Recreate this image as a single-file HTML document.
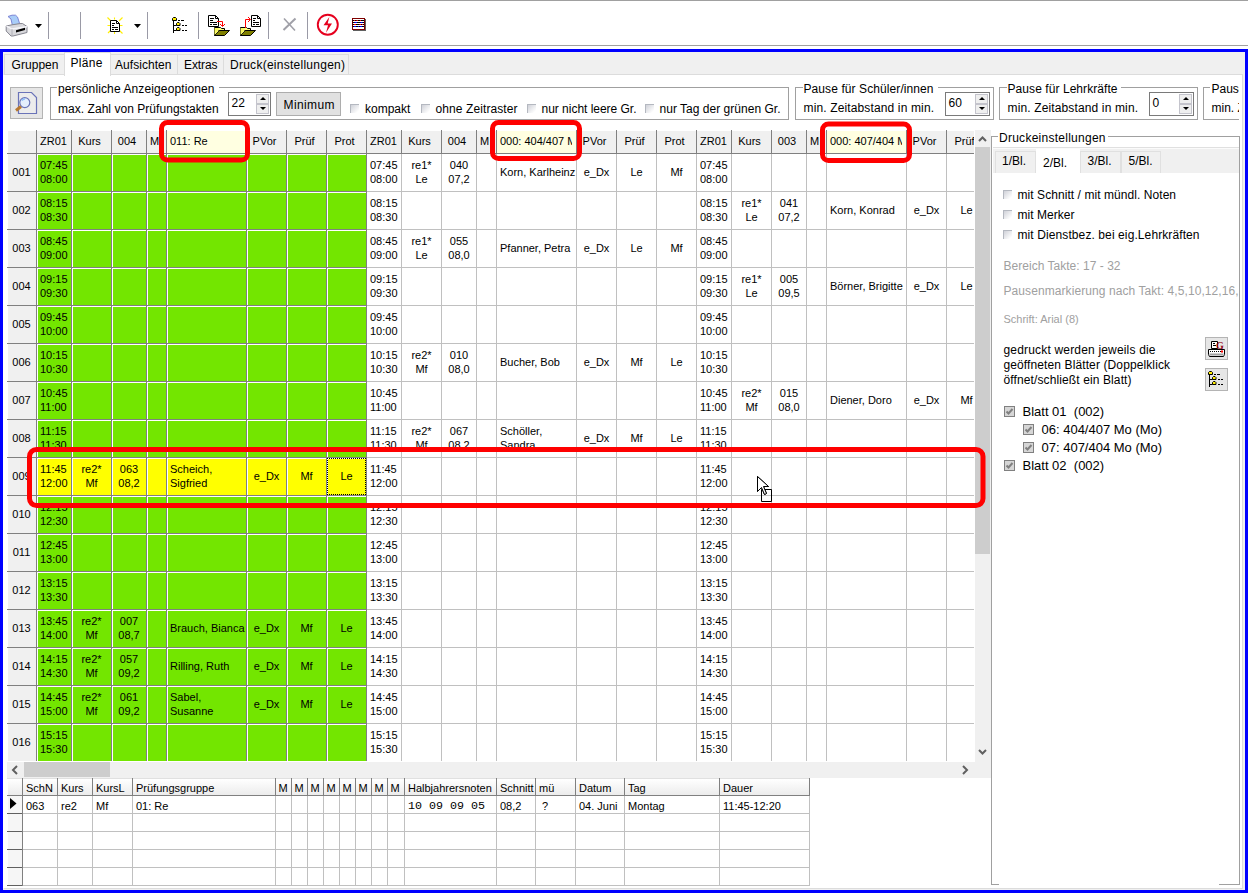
<!DOCTYPE html>
<html><head><meta charset="utf-8"><title>Pläne</title>
<style>
html,body{margin:0;padding:0;background:#fff;}
body{width:1248px;height:893px;position:relative;overflow:hidden;font-family:"Liberation Sans",sans-serif;color:#000;}
div,span,svg{position:absolute;box-sizing:border-box;}
span{white-space:pre;}
.t11{font-size:11px;line-height:14px;}
.t12{font-size:12px;line-height:14px;}
.t13{font-size:13px;line-height:15px;}
.mono{font-family:"Liberation Mono",monospace;font-size:11.67px;line-height:14px;}
.cb{width:9px;height:9px;border-top:1px solid #b4b8c0;border-left:1px solid #b4b8c0;background:linear-gradient(135deg,#cfd1d8,#ffffff 85%);}
.cbk{width:11px;height:11px;border:1px solid #808080;background:#d6d6d6;}
.spin{border:1px solid #7a7a7a;background:#fff;}
.sb{background:#efefef;border:1px solid #c4c4cc;}
.btn{background:#e6e6e6;border:1px solid #b4b4b4;}
.clip{overflow:hidden;}
</style></head><body>

<div style="left:0px;top:0px;width:1248px;height:1px;background:#a0a0a0;"></div>
<div style="left:0px;top:45px;width:1248px;height:1px;background:#a0a0a0;"></div>
<div style="left:48px;top:12px;width:1px;height:27px;background:#9a9aa6;"></div>
<div style="left:80px;top:12px;width:1px;height:27px;background:#9a9aa6;"></div>
<div style="left:147px;top:12px;width:1px;height:27px;background:#9a9aa6;"></div>
<div style="left:198px;top:12px;width:1px;height:27px;background:#9a9aa6;"></div>
<div style="left:268px;top:12px;width:1px;height:27px;background:#9a9aa6;"></div>
<div style="left:307px;top:12px;width:1px;height:27px;background:#9a9aa6;"></div>
<svg style="left:5px;top:14px" width="24" height="24" viewBox="0 0 24 24">
<path d="M3,2.5 L7,1.2 L10.5,1.2 L12.5,3 L14.7,9.8 L7.5,11.8 L6,5 Z" fill="#a9cdf8" stroke="#7d86d6" stroke-width="1"/>
<path d="M1.2,12 L7,10.8 L15,9.6 L17.5,9.5 L22,12.5 L22,18.5 L8,22 L6,22 L1.2,17 Z" fill="#d8d8dc" stroke="#85858f" stroke-width="1"/>
<path d="M1.5,12.2 L7,15 L22,12.7" fill="none" stroke="#f6f6fa" stroke-width="1.4"/>
<path d="M7,15 L7,22" stroke="#b0b0b8" stroke-width="1"/>
<path d="M11,16.2 L20,13.8 L20,15.9 L11,18.4 Z" fill="#000"/>
</svg>
<svg style="left:35px;top:24px" width="8" height="5" viewBox="0 0 8 5"><path d="M0,0 L7,0 L3.5,4 Z" fill="#000"/></svg>
<svg style="left:106px;top:16px" width="19" height="19" viewBox="0 0 19 19">
<g stroke="#ffee00" stroke-width="1.1"><path d="M1.5,1.5 L5,5 M16.5,1.5 L13,5 M1.5,9.5 L4,9.5 M16.5,9.5 L14,9.5 M2,17 L5,14 M16.5,17.5 L13,14 M8.5,1.5 L8.5,3.5 M8.5,18 L8.5,16"/></g>
<path d="M4.5,4.5 L10.5,4.5 L13.5,7.5 L13.5,15.5 L4.5,15.5 Z" fill="#fff" stroke="#000" stroke-width="1"/>
<path d="M10.5,4.5 L10.5,7.5 L13.5,7.5" fill="none" stroke="#000" stroke-width="1"/>
<path d="M6,7.5 H9 M6,9.5 H8 M6,11.5 H12 M6,13.5 H8 M9,13.5 H12" stroke="#000" stroke-width="1"/>
</svg>
<svg style="left:134px;top:24px" width="8" height="5" viewBox="0 0 8 5"><path d="M0,0 L7,0 L3.5,4 Z" fill="#000"/></svg>
<svg style="left:171px;top:16px" width="17" height="18" viewBox="0 0 17 18">
<path d="M2.5,4 V17 M2.5,9.5 H5.5 M2.5,14.5 H5.5" stroke="#000" stroke-width="1" fill="none"/>
<path d="M7,4.5 H9 M10,4.5 H13 M11,9.5 H13 M14,9.5 H16 M11,14.5 H13 M14,14.5 H16" stroke="#000" stroke-width="1"/>
<path d="M1.5,2.5 L2.5,1.5 L4.5,1.5 L5.5,2.5 L5.5,4.5 L1.5,4.5 Z" fill="#ffee00" stroke="#000" stroke-width="1"/>
<path d="M5.5,7.5 L6.5,6.5 L8,6.5 L9,7.5 L9,9.5 L5.5,9.5 Z" fill="#ffee00" stroke="#000" stroke-width="1"/>
<path d="M5.5,12.5 L6.5,11.5 L8,11.5 L9,12.5 L9,14.5 L5.5,14.5 Z" fill="#ffee00" stroke="#000" stroke-width="1"/>
</svg>
<svg style="left:208px;top:14px" width="24" height="23" viewBox="0 0 24 23">
<path d="M0.5,1.5 L7.5,1.5 L10.5,4.5 L10.5,12.5 L0.5,12.5 Z" fill="#fff" stroke="#000" stroke-width="1"/>
<path d="M7.5,1.5 V4.5 H10.5" fill="none" stroke="#000"/>
<path d="M2,4.5 H6 M2,6.5 H5 M2,8.5 H9 M2,10.5 H4 M5,10.5 H9" stroke="#000" stroke-width="1"/>
<path d="M6.5,13.5 L12.5,13.5 L13.5,14.5 L16.5,14.5 L16.5,16.5 L6.5,16.5 Z" fill="#ffff80" stroke="#000"/>
<path d="M6.5,14 L6.5,21.5 L16.5,21.5 L21.5,16.5 L11.5,16.5 L6.5,21.5" fill="#808000" stroke="#000" stroke-width="1"/>
<path d="M6.5,14 L6.5,21 L10.5,17 L10.5,14.5 Z" fill="#f8f860" stroke="none"/>
<path d="M9,7.5 H14.5 V12 M12,10 L14.5,12.5 L17,10" fill="none" stroke="#ff0000" stroke-width="1"/>
</svg>
<svg style="left:239px;top:14px" width="24" height="23" viewBox="0 0 24 23">
<path d="M12.5,1.5 L18.5,1.5 L21.5,4.5 L21.5,12.5 L12.5,12.5 Z" fill="#fff" stroke="#000" stroke-width="1"/>
<path d="M18.5,1.5 V4.5 H21.5" fill="none" stroke="#000"/>
<path d="M14,4.5 H17 M14,6.5 H16 M14,8.5 H20 M14,10.5 H16 M17,10.5 H20" stroke="#000" stroke-width="1"/>
<path d="M1.5,13.5 L7.5,13.5 L8.5,14.5 L11.5,14.5 L11.5,16.5 L1.5,16.5 Z" fill="#ffff80" stroke="#000"/>
<path d="M1.5,14 L1.5,21.5 L11.5,21.5 L16.5,16.5 L6.5,16.5 L1.5,21.5" fill="#808000" stroke="#000" stroke-width="1"/>
<path d="M1.5,14 L1.5,21 L5.5,17 L5.5,14.5 Z" fill="#f8f860" stroke="none"/>
<path d="M6.5,14 V5.5 H11 M9,3 L11.5,5.5 L9,8" fill="none" stroke="#ff0000" stroke-width="1"/>
</svg>
<svg style="left:282px;top:17px" width="16" height="16" viewBox="0 0 16 16">
<path d="M2,1.5 L13,13.5" stroke="#a0a0a8" stroke-width="1.6" fill="none"/>
<path d="M13.5,1.5 L1.5,13" stroke="#a0a0a8" stroke-width="2" fill="none"/>
</svg>
<svg style="left:315px;top:12px" width="26" height="26" viewBox="0 0 26 26">
<circle cx="12.8" cy="12.7" r="10" fill="none" stroke="#e6001e" stroke-width="1.9"/>
<path d="M14.3,5 L8.5,13.2 L13,13.2 L11,20.8 L17,11.6 L12.7,11.6 Z" fill="#e6001e"/>
</svg>
<svg style="left:351px;top:17px" width="16" height="15" viewBox="0 0 16 15">
<rect x="2" y="2" width="13" height="12" fill="#606060"/>
<rect x="1.5" y="1.5" width="12" height="11" fill="#fff" stroke="#800000" stroke-width="1"/>
<path d="M1.5,3.5 H13 M1.5,5.5 H13 M1.5,7.5 H13 M1.5,9.5 H13" stroke="#000" stroke-width="1"/>
<path d="M3,3.5 H4 M5.5,3.5 H7 M9,3.5 H10 M3,7.5 H5 M8.5,7.5 H10 M11,7.5 H12" stroke="#ff0000" stroke-width="1.2"/>
<path d="M3.5,5.5 H6 M9.5,5.5 H11.5 M3,9.5 H5 M7,9.5 H8 M9,9.5 H11" stroke="#0000ff" stroke-width="1.2"/>
</svg>
<div style="left:0px;top:49px;width:1248px;height:844px;background:#f0f0f0;border:3px solid #0000ff;"></div>
<div style="left:3px;top:74px;width:1240px;height:815px;background:#fff;border:1px solid #dcdcdc;border-left-color:#fff;"></div>
<div style="left:4px;top:54px;width:61px;height:21px;background:#f0f0f0;border:1px solid #dcdcdc;"></div>
<span class="t12 " style="left:11.5px;top:58px;letter-spacing:0.052px;">Gruppen</span>
<div style="left:64px;top:52px;width:47px;height:24px;background:#fff;border:1px solid #dcdcdc;border-bottom:none;"></div>
<span class="t12 " style="left:70.5px;top:56px;letter-spacing:0.328px;">Pläne</span>
<div style="left:110px;top:54px;width:68px;height:21px;background:#f0f0f0;border:1px solid #dcdcdc;"></div>
<span class="t12 " style="left:115px;top:58px;letter-spacing:0.054px;">Aufsichten</span>
<div style="left:177px;top:54px;width:47px;height:21px;background:#f0f0f0;border:1px solid #dcdcdc;"></div>
<span class="t12 " style="left:184px;top:58px;letter-spacing:-0.100px;">Extras</span>
<div style="left:223px;top:54px;width:126px;height:21px;background:#f0f0f0;border:1px solid #dcdcdc;"></div>
<span class="t12 " style="left:230px;top:58px;letter-spacing:0.260px;">Druck(einstellungen)</span>
<div class="btn" style="left:10px;top:87px;width:33px;height:32px;"></div>
<svg style="left:13px;top:90px" width="26" height="26" viewBox="0 0 26 26">
<path d="M5.5,2.5 L18.5,2.5 L23.5,7.5 L23.5,23.5 L5.5,23.5 Z" fill="#ececec" stroke="#6a73b8" stroke-width="1.2"/>
<circle cx="11.8" cy="12.6" r="5" fill="#e4eefc" stroke="#6a73b8" stroke-width="1.2"/>
<path d="M9,10.5 A3.5,3.5 0 0 1 12,9" stroke="#8cc0f8" stroke-width="1.6" fill="none"/>
<path d="M8,16.5 L3,20.5" stroke="#b87830" stroke-width="3"/>
</svg>
<div style="left:50px;top:87px;width:1px;height:33px;background:#a0a0a0;"></div>
<div style="left:50px;top:119px;width:739px;height:1px;background:#a0a0a0;"></div>
<div style="left:788px;top:87px;width:1px;height:33px;background:#a0a0a0;"></div>
<div style="left:50px;top:87px;width:7px;height:1px;background:#a0a0a0;"></div>
<div style="left:219px;top:87px;width:570px;height:1px;background:#a0a0a0;"></div>
<span class="t12 " style="left:58px;top:82px;letter-spacing:0.118px;">persönliche Anzeigeoptionen</span>
<span class="t12 " style="left:58px;top:102px;letter-spacing:0.042px;">max. Zahl von Prüfungstakten</span>
<div class="spin" style="left:228px;top:92px;width:43px;height:24px;"></div>
<span class="t12 " style="left:231.5px;top:96px;">22</span>
<div class="sb" style="left:256px;top:94px;width:13px;height:10px;"></div>
<div class="sb" style="left:256px;top:104px;width:13px;height:10px;"></div>
<svg style="left:259.5px;top:97px" width="6" height="3" viewBox="0 0 6 3"><path d="M0,3 L3,0 L6,3 Z" fill="#000"/></svg>
<svg style="left:259.5px;top:107px" width="6" height="3" viewBox="0 0 6 3"><path d="M0,0 L6,0 L3,3 Z" fill="#000"/></svg>
<div style="left:276px;top:92px;width:65px;height:24px;background:#e1e1e1;border:1px solid #adadad;"></div>
<span class="t12 " style="left:283.5px;top:98px;letter-spacing:0.385px;">Minimum</span>
<div class="cb" style="left:350px;top:104px;width:9px;height:9px;"></div>
<span class="t12 " style="left:365px;top:102px;">kompakt</span>
<div class="cb" style="left:421px;top:104px;width:9px;height:9px;"></div>
<span class="t12 " style="left:435.5px;top:102px;letter-spacing:0.094px;">ohne Zeitraster</span>
<div class="cb" style="left:527px;top:104px;width:9px;height:9px;"></div>
<span class="t12 " style="left:541.5px;top:102px;letter-spacing:-0.020px;">nur nicht leere Gr.</span>
<div class="cb" style="left:645px;top:104px;width:9px;height:9px;"></div>
<span class="t12 " style="left:659.5px;top:102px;letter-spacing:0.025px;">nur Tag der grünen Gr.</span>
<div style="left:795px;top:87px;width:1px;height:33px;background:#a0a0a0;"></div>
<div style="left:795px;top:119px;width:199px;height:1px;background:#a0a0a0;"></div>
<div style="left:993px;top:87px;width:1px;height:33px;background:#a0a0a0;"></div>
<div style="left:795px;top:87px;width:7.5px;height:1px;background:#a0a0a0;"></div>
<div style="left:938px;top:87px;width:56px;height:1px;background:#a0a0a0;"></div>
<span class="t12 " style="left:803.5px;top:82px;letter-spacing:0.089px;">Pause für Schüler/innen</span>
<span class="t12 " style="left:803.5px;top:101px;letter-spacing:0.137px;">min. Zeitabstand in min.</span>
<div class="spin" style="left:945px;top:92px;width:45px;height:24px;"></div>
<span class="t12 " style="left:948.5px;top:96px;">60</span>
<div class="sb" style="left:975px;top:94px;width:13px;height:10px;"></div>
<div class="sb" style="left:975px;top:104px;width:13px;height:10px;"></div>
<svg style="left:978.5px;top:97px" width="6" height="3" viewBox="0 0 6 3"><path d="M0,3 L3,0 L6,3 Z" fill="#000"/></svg>
<svg style="left:978.5px;top:107px" width="6" height="3" viewBox="0 0 6 3"><path d="M0,0 L6,0 L3,3 Z" fill="#000"/></svg>
<div style="left:999px;top:87px;width:1px;height:33px;background:#a0a0a0;"></div>
<div style="left:999px;top:119px;width:199px;height:1px;background:#a0a0a0;"></div>
<div style="left:1197px;top:87px;width:1px;height:33px;background:#a0a0a0;"></div>
<div style="left:999px;top:87px;width:7.5px;height:1px;background:#a0a0a0;"></div>
<div style="left:1121px;top:87px;width:77px;height:1px;background:#a0a0a0;"></div>
<span class="t12 " style="left:1007.5px;top:82px;letter-spacing:0.069px;">Pause für Lehrkräfte</span>
<span class="t12 " style="left:1007.5px;top:101px;letter-spacing:0.137px;">min. Zeitabstand in min.</span>
<div class="spin" style="left:1149px;top:92px;width:45px;height:24px;"></div>
<span class="t12 " style="left:1152.5px;top:96px;">0</span>
<div class="sb" style="left:1179px;top:94px;width:13px;height:10px;"></div>
<div class="sb" style="left:1179px;top:104px;width:13px;height:10px;"></div>
<svg style="left:1182.5px;top:97px" width="6" height="3" viewBox="0 0 6 3"><path d="M0,3 L3,0 L6,3 Z" fill="#000"/></svg>
<svg style="left:1182.5px;top:107px" width="6" height="3" viewBox="0 0 6 3"><path d="M0,0 L6,0 L3,3 Z" fill="#000"/></svg>
<div class="clip" style="left:1203px;top:80px;width:36px;height:42px;">
<div style="left:0px;top:7px;width:1px;height:33px;background:#a0a0a0;"></div>
<div style="left:0px;top:7px;width:7px;height:1px;background:#a0a0a0;"></div>
<div style="left:0px;top:39px;width:40px;height:1px;background:#a0a0a0;"></div>
<span class="t12 " style="left:8.5px;top:2px;">Pause</span>
<span class="t12 " style="left:8.5px;top:21px;">min. Z</span>
</div>
<div class="clip" style="left:7px;top:130px;width:967px;height:631px;background:#fff;">
<div style="left:1px;top:1px;width:967px;height:22px;background:#f0f0f0;"></div>
<div style="left:1px;top:1px;width:28px;height:631px;background:#f0f0f0;"></div>
<div style="left:0px;top:23px;width:968px;height:1px;background:#808080;"></div>
<div style="left:29px;top:0px;width:1px;height:632px;background:#808080;"></div>
<div style="left:0px;top:61px;width:30px;height:1px;background:#808080;"></div>
<span class="t11" style="left:-45.5px;top:35px;width:120px;text-align:center;">001</span>
<div style="left:0px;top:99px;width:30px;height:1px;background:#808080;"></div>
<span class="t11" style="left:-45.5px;top:73px;width:120px;text-align:center;">002</span>
<div style="left:0px;top:137px;width:30px;height:1px;background:#808080;"></div>
<span class="t11" style="left:-45.5px;top:111px;width:120px;text-align:center;">003</span>
<div style="left:0px;top:175px;width:30px;height:1px;background:#808080;"></div>
<span class="t11" style="left:-45.5px;top:149px;width:120px;text-align:center;">004</span>
<div style="left:0px;top:213px;width:30px;height:1px;background:#808080;"></div>
<span class="t11" style="left:-45.5px;top:187px;width:120px;text-align:center;">005</span>
<div style="left:0px;top:251px;width:30px;height:1px;background:#808080;"></div>
<span class="t11" style="left:-45.5px;top:225px;width:120px;text-align:center;">006</span>
<div style="left:0px;top:289px;width:30px;height:1px;background:#808080;"></div>
<span class="t11" style="left:-45.5px;top:263px;width:120px;text-align:center;">007</span>
<div style="left:0px;top:327px;width:30px;height:1px;background:#808080;"></div>
<span class="t11" style="left:-45.5px;top:301px;width:120px;text-align:center;">008</span>
<div style="left:0px;top:365px;width:30px;height:1px;background:#808080;"></div>
<span class="t11" style="left:-45.5px;top:339px;width:120px;text-align:center;">009</span>
<div style="left:0px;top:403px;width:30px;height:1px;background:#808080;"></div>
<span class="t11" style="left:-45.5px;top:377px;width:120px;text-align:center;">010</span>
<div style="left:0px;top:441px;width:30px;height:1px;background:#808080;"></div>
<span class="t11" style="left:-45.5px;top:415px;width:120px;text-align:center;">011</span>
<div style="left:0px;top:479px;width:30px;height:1px;background:#808080;"></div>
<span class="t11" style="left:-45.5px;top:453px;width:120px;text-align:center;">012</span>
<div style="left:0px;top:517px;width:30px;height:1px;background:#808080;"></div>
<span class="t11" style="left:-45.5px;top:491px;width:120px;text-align:center;">013</span>
<div style="left:0px;top:555px;width:30px;height:1px;background:#808080;"></div>
<span class="t11" style="left:-45.5px;top:529px;width:120px;text-align:center;">014</span>
<div style="left:0px;top:593px;width:30px;height:1px;background:#808080;"></div>
<span class="t11" style="left:-45.5px;top:567px;width:120px;text-align:center;">015</span>
<div style="left:0px;top:631px;width:30px;height:1px;background:#808080;"></div>
<span class="t11" style="left:-45.5px;top:605px;width:120px;text-align:center;">016</span>
<div style="left:64px;top:0px;width:1px;height:23px;background:#808080;"></div>
<span class="t11 " style="left:33px;top:4px;">ZR01</span>
<div style="left:64px;top:24px;width:1px;height:608px;background:#808080;"></div>
<div style="left:104px;top:0px;width:1px;height:23px;background:#808080;"></div>
<span class="t11" style="left:22.5px;top:4px;width:120px;text-align:center;">Kurs</span>
<div style="left:104px;top:24px;width:1px;height:608px;background:#808080;"></div>
<div style="left:139px;top:0px;width:1px;height:23px;background:#808080;"></div>
<span class="t11" style="left:60.0px;top:4px;width:120px;text-align:center;">004</span>
<div style="left:139px;top:24px;width:1px;height:608px;background:#808080;"></div>
<div style="left:159px;top:0px;width:1px;height:23px;background:#808080;"></div>
<span class="t11" style="left:87.5px;top:4px;width:120px;text-align:center;">M</span>
<div style="left:159px;top:24px;width:1px;height:608px;background:#808080;"></div>
<div style="left:239px;top:0px;width:1px;height:23px;background:#808080;"></div>
<div style="left:160px;top:1px;width:79px;height:22px;background:#ffffe1;"></div>
<div class="clip" style="left:160px;top:1px;width:75px;height:22px;">
<span class="t11 " style="left:3px;top:3px;">011: Re</span>
</div>
<div style="left:239px;top:24px;width:1px;height:608px;background:#808080;"></div>
<div style="left:279px;top:0px;width:1px;height:23px;background:#808080;"></div>
<span class="t11" style="left:197.5px;top:4px;width:120px;text-align:center;">PVor</span>
<div style="left:279px;top:24px;width:1px;height:608px;background:#808080;"></div>
<div style="left:319px;top:0px;width:1px;height:23px;background:#808080;"></div>
<span class="t11" style="left:237.5px;top:4px;width:120px;text-align:center;">Prüf</span>
<div style="left:319px;top:24px;width:1px;height:608px;background:#808080;"></div>
<div style="left:359px;top:0px;width:1px;height:23px;background:#808080;"></div>
<span class="t11" style="left:277.5px;top:4px;width:120px;text-align:center;">Prot</span>
<div style="left:359px;top:24px;width:1px;height:608px;background:#808080;"></div>
<div style="left:30px;top:61px;width:330px;height:1px;background:#808080;"></div>
<div style="left:31px;top:25px;width:33px;height:36px;background:#73e600;"></div>
<span class="t11 " style="left:33px;top:28px;">07:45</span>
<span class="t11 " style="left:33px;top:42px;">08:00</span>
<div style="left:66px;top:25px;width:38px;height:36px;background:#73e600;"></div>
<div style="left:106px;top:25px;width:33px;height:36px;background:#73e600;"></div>
<div style="left:141px;top:25px;width:18px;height:36px;background:#73e600;"></div>
<div style="left:161px;top:25px;width:78px;height:36px;background:#73e600;"></div>
<div style="left:241px;top:25px;width:38px;height:36px;background:#73e600;"></div>
<div style="left:281px;top:25px;width:38px;height:36px;background:#73e600;"></div>
<div style="left:321px;top:25px;width:38px;height:36px;background:#73e600;"></div>
<div style="left:30px;top:99px;width:330px;height:1px;background:#808080;"></div>
<div style="left:31px;top:63px;width:33px;height:36px;background:#73e600;"></div>
<span class="t11 " style="left:33px;top:66px;">08:15</span>
<span class="t11 " style="left:33px;top:80px;">08:30</span>
<div style="left:66px;top:63px;width:38px;height:36px;background:#73e600;"></div>
<div style="left:106px;top:63px;width:33px;height:36px;background:#73e600;"></div>
<div style="left:141px;top:63px;width:18px;height:36px;background:#73e600;"></div>
<div style="left:161px;top:63px;width:78px;height:36px;background:#73e600;"></div>
<div style="left:241px;top:63px;width:38px;height:36px;background:#73e600;"></div>
<div style="left:281px;top:63px;width:38px;height:36px;background:#73e600;"></div>
<div style="left:321px;top:63px;width:38px;height:36px;background:#73e600;"></div>
<div style="left:30px;top:137px;width:330px;height:1px;background:#808080;"></div>
<div style="left:31px;top:101px;width:33px;height:36px;background:#73e600;"></div>
<span class="t11 " style="left:33px;top:104px;">08:45</span>
<span class="t11 " style="left:33px;top:118px;">09:00</span>
<div style="left:66px;top:101px;width:38px;height:36px;background:#73e600;"></div>
<div style="left:106px;top:101px;width:33px;height:36px;background:#73e600;"></div>
<div style="left:141px;top:101px;width:18px;height:36px;background:#73e600;"></div>
<div style="left:161px;top:101px;width:78px;height:36px;background:#73e600;"></div>
<div style="left:241px;top:101px;width:38px;height:36px;background:#73e600;"></div>
<div style="left:281px;top:101px;width:38px;height:36px;background:#73e600;"></div>
<div style="left:321px;top:101px;width:38px;height:36px;background:#73e600;"></div>
<div style="left:30px;top:175px;width:330px;height:1px;background:#808080;"></div>
<div style="left:31px;top:139px;width:33px;height:36px;background:#73e600;"></div>
<span class="t11 " style="left:33px;top:142px;">09:15</span>
<span class="t11 " style="left:33px;top:156px;">09:30</span>
<div style="left:66px;top:139px;width:38px;height:36px;background:#73e600;"></div>
<div style="left:106px;top:139px;width:33px;height:36px;background:#73e600;"></div>
<div style="left:141px;top:139px;width:18px;height:36px;background:#73e600;"></div>
<div style="left:161px;top:139px;width:78px;height:36px;background:#73e600;"></div>
<div style="left:241px;top:139px;width:38px;height:36px;background:#73e600;"></div>
<div style="left:281px;top:139px;width:38px;height:36px;background:#73e600;"></div>
<div style="left:321px;top:139px;width:38px;height:36px;background:#73e600;"></div>
<div style="left:30px;top:213px;width:330px;height:1px;background:#808080;"></div>
<div style="left:31px;top:177px;width:33px;height:36px;background:#73e600;"></div>
<span class="t11 " style="left:33px;top:180px;">09:45</span>
<span class="t11 " style="left:33px;top:194px;">10:00</span>
<div style="left:66px;top:177px;width:38px;height:36px;background:#73e600;"></div>
<div style="left:106px;top:177px;width:33px;height:36px;background:#73e600;"></div>
<div style="left:141px;top:177px;width:18px;height:36px;background:#73e600;"></div>
<div style="left:161px;top:177px;width:78px;height:36px;background:#73e600;"></div>
<div style="left:241px;top:177px;width:38px;height:36px;background:#73e600;"></div>
<div style="left:281px;top:177px;width:38px;height:36px;background:#73e600;"></div>
<div style="left:321px;top:177px;width:38px;height:36px;background:#73e600;"></div>
<div style="left:30px;top:251px;width:330px;height:1px;background:#808080;"></div>
<div style="left:31px;top:215px;width:33px;height:36px;background:#73e600;"></div>
<span class="t11 " style="left:33px;top:218px;">10:15</span>
<span class="t11 " style="left:33px;top:232px;">10:30</span>
<div style="left:66px;top:215px;width:38px;height:36px;background:#73e600;"></div>
<div style="left:106px;top:215px;width:33px;height:36px;background:#73e600;"></div>
<div style="left:141px;top:215px;width:18px;height:36px;background:#73e600;"></div>
<div style="left:161px;top:215px;width:78px;height:36px;background:#73e600;"></div>
<div style="left:241px;top:215px;width:38px;height:36px;background:#73e600;"></div>
<div style="left:281px;top:215px;width:38px;height:36px;background:#73e600;"></div>
<div style="left:321px;top:215px;width:38px;height:36px;background:#73e600;"></div>
<div style="left:30px;top:289px;width:330px;height:1px;background:#808080;"></div>
<div style="left:31px;top:253px;width:33px;height:36px;background:#73e600;"></div>
<span class="t11 " style="left:33px;top:256px;">10:45</span>
<span class="t11 " style="left:33px;top:270px;">11:00</span>
<div style="left:66px;top:253px;width:38px;height:36px;background:#73e600;"></div>
<div style="left:106px;top:253px;width:33px;height:36px;background:#73e600;"></div>
<div style="left:141px;top:253px;width:18px;height:36px;background:#73e600;"></div>
<div style="left:161px;top:253px;width:78px;height:36px;background:#73e600;"></div>
<div style="left:241px;top:253px;width:38px;height:36px;background:#73e600;"></div>
<div style="left:281px;top:253px;width:38px;height:36px;background:#73e600;"></div>
<div style="left:321px;top:253px;width:38px;height:36px;background:#73e600;"></div>
<div style="left:30px;top:327px;width:330px;height:1px;background:#808080;"></div>
<div style="left:31px;top:291px;width:33px;height:36px;background:#73e600;"></div>
<span class="t11 " style="left:33px;top:294px;">11:15</span>
<span class="t11 " style="left:33px;top:308px;">11:30</span>
<div style="left:66px;top:291px;width:38px;height:36px;background:#73e600;"></div>
<div style="left:106px;top:291px;width:33px;height:36px;background:#73e600;"></div>
<div style="left:141px;top:291px;width:18px;height:36px;background:#73e600;"></div>
<div style="left:161px;top:291px;width:78px;height:36px;background:#73e600;"></div>
<div style="left:241px;top:291px;width:38px;height:36px;background:#73e600;"></div>
<div style="left:281px;top:291px;width:38px;height:36px;background:#73e600;"></div>
<div style="left:321px;top:291px;width:38px;height:36px;background:#73e600;"></div>
<div style="left:30px;top:365px;width:330px;height:1px;background:#808080;"></div>
<div style="left:31px;top:329px;width:33px;height:36px;background:#ffff00;"></div>
<span class="t11 " style="left:33px;top:332px;">11:45</span>
<span class="t11 " style="left:33px;top:346px;">12:00</span>
<div style="left:66px;top:329px;width:38px;height:36px;background:#ffff00;"></div>
<span class="t11" style="left:24.5px;top:332px;width:120px;text-align:center;">re2*</span>
<span class="t11" style="left:24.5px;top:346px;width:120px;text-align:center;">Mf</span>
<div style="left:106px;top:329px;width:33px;height:36px;background:#ffff00;"></div>
<span class="t11" style="left:62.0px;top:332px;width:120px;text-align:center;">063</span>
<span class="t11" style="left:62.0px;top:346px;width:120px;text-align:center;">08,2</span>
<div style="left:141px;top:329px;width:18px;height:36px;background:#ffff00;"></div>
<div style="left:161px;top:329px;width:78px;height:36px;background:#ffff00;"></div>
<span class="t11 " style="left:163px;top:332px;">Scheich,</span>
<span class="t11 " style="left:163px;top:346px;">Sigfried</span>
<div style="left:241px;top:329px;width:38px;height:36px;background:#ffff00;"></div>
<span class="t11" style="left:199.5px;top:339px;width:120px;text-align:center;">e_Dx</span>
<div style="left:281px;top:329px;width:38px;height:36px;background:#ffff00;"></div>
<span class="t11" style="left:239.5px;top:339px;width:120px;text-align:center;">Mf</span>
<div style="left:321px;top:329px;width:38px;height:36px;background:#ffff00;"></div>
<span class="t11" style="left:279.5px;top:339px;width:120px;text-align:center;">Le</span>
<div style="left:30px;top:403px;width:330px;height:1px;background:#808080;"></div>
<div style="left:31px;top:367px;width:33px;height:36px;background:#73e600;"></div>
<span class="t11 " style="left:33px;top:370px;">12:15</span>
<span class="t11 " style="left:33px;top:384px;">12:30</span>
<div style="left:66px;top:367px;width:38px;height:36px;background:#73e600;"></div>
<div style="left:106px;top:367px;width:33px;height:36px;background:#73e600;"></div>
<div style="left:141px;top:367px;width:18px;height:36px;background:#73e600;"></div>
<div style="left:161px;top:367px;width:78px;height:36px;background:#73e600;"></div>
<div style="left:241px;top:367px;width:38px;height:36px;background:#73e600;"></div>
<div style="left:281px;top:367px;width:38px;height:36px;background:#73e600;"></div>
<div style="left:321px;top:367px;width:38px;height:36px;background:#73e600;"></div>
<div style="left:30px;top:441px;width:330px;height:1px;background:#808080;"></div>
<div style="left:31px;top:405px;width:33px;height:36px;background:#73e600;"></div>
<span class="t11 " style="left:33px;top:408px;">12:45</span>
<span class="t11 " style="left:33px;top:422px;">13:00</span>
<div style="left:66px;top:405px;width:38px;height:36px;background:#73e600;"></div>
<div style="left:106px;top:405px;width:33px;height:36px;background:#73e600;"></div>
<div style="left:141px;top:405px;width:18px;height:36px;background:#73e600;"></div>
<div style="left:161px;top:405px;width:78px;height:36px;background:#73e600;"></div>
<div style="left:241px;top:405px;width:38px;height:36px;background:#73e600;"></div>
<div style="left:281px;top:405px;width:38px;height:36px;background:#73e600;"></div>
<div style="left:321px;top:405px;width:38px;height:36px;background:#73e600;"></div>
<div style="left:30px;top:479px;width:330px;height:1px;background:#808080;"></div>
<div style="left:31px;top:443px;width:33px;height:36px;background:#73e600;"></div>
<span class="t11 " style="left:33px;top:446px;">13:15</span>
<span class="t11 " style="left:33px;top:460px;">13:30</span>
<div style="left:66px;top:443px;width:38px;height:36px;background:#73e600;"></div>
<div style="left:106px;top:443px;width:33px;height:36px;background:#73e600;"></div>
<div style="left:141px;top:443px;width:18px;height:36px;background:#73e600;"></div>
<div style="left:161px;top:443px;width:78px;height:36px;background:#73e600;"></div>
<div style="left:241px;top:443px;width:38px;height:36px;background:#73e600;"></div>
<div style="left:281px;top:443px;width:38px;height:36px;background:#73e600;"></div>
<div style="left:321px;top:443px;width:38px;height:36px;background:#73e600;"></div>
<div style="left:30px;top:517px;width:330px;height:1px;background:#808080;"></div>
<div style="left:31px;top:481px;width:33px;height:36px;background:#73e600;"></div>
<span class="t11 " style="left:33px;top:484px;">13:45</span>
<span class="t11 " style="left:33px;top:498px;">14:00</span>
<div style="left:66px;top:481px;width:38px;height:36px;background:#73e600;"></div>
<span class="t11" style="left:24.5px;top:484px;width:120px;text-align:center;">re2*</span>
<span class="t11" style="left:24.5px;top:498px;width:120px;text-align:center;">Mf</span>
<div style="left:106px;top:481px;width:33px;height:36px;background:#73e600;"></div>
<span class="t11" style="left:62.0px;top:484px;width:120px;text-align:center;">007</span>
<span class="t11" style="left:62.0px;top:498px;width:120px;text-align:center;">08,7</span>
<div style="left:141px;top:481px;width:18px;height:36px;background:#73e600;"></div>
<div style="left:161px;top:481px;width:78px;height:36px;background:#73e600;"></div>
<span class="t11 " style="left:163px;top:491px;">Brauch, Bianca</span>
<div style="left:241px;top:481px;width:38px;height:36px;background:#73e600;"></div>
<span class="t11" style="left:199.5px;top:491px;width:120px;text-align:center;">e_Dx</span>
<div style="left:281px;top:481px;width:38px;height:36px;background:#73e600;"></div>
<span class="t11" style="left:239.5px;top:491px;width:120px;text-align:center;">Mf</span>
<div style="left:321px;top:481px;width:38px;height:36px;background:#73e600;"></div>
<span class="t11" style="left:279.5px;top:491px;width:120px;text-align:center;">Le</span>
<div style="left:30px;top:555px;width:330px;height:1px;background:#808080;"></div>
<div style="left:31px;top:519px;width:33px;height:36px;background:#73e600;"></div>
<span class="t11 " style="left:33px;top:522px;">14:15</span>
<span class="t11 " style="left:33px;top:536px;">14:30</span>
<div style="left:66px;top:519px;width:38px;height:36px;background:#73e600;"></div>
<span class="t11" style="left:24.5px;top:522px;width:120px;text-align:center;">re2*</span>
<span class="t11" style="left:24.5px;top:536px;width:120px;text-align:center;">Mf</span>
<div style="left:106px;top:519px;width:33px;height:36px;background:#73e600;"></div>
<span class="t11" style="left:62.0px;top:522px;width:120px;text-align:center;">057</span>
<span class="t11" style="left:62.0px;top:536px;width:120px;text-align:center;">09,2</span>
<div style="left:141px;top:519px;width:18px;height:36px;background:#73e600;"></div>
<div style="left:161px;top:519px;width:78px;height:36px;background:#73e600;"></div>
<span class="t11 " style="left:163px;top:529px;">Rilling, Ruth</span>
<div style="left:241px;top:519px;width:38px;height:36px;background:#73e600;"></div>
<span class="t11" style="left:199.5px;top:529px;width:120px;text-align:center;">e_Dx</span>
<div style="left:281px;top:519px;width:38px;height:36px;background:#73e600;"></div>
<span class="t11" style="left:239.5px;top:529px;width:120px;text-align:center;">Mf</span>
<div style="left:321px;top:519px;width:38px;height:36px;background:#73e600;"></div>
<span class="t11" style="left:279.5px;top:529px;width:120px;text-align:center;">Le</span>
<div style="left:30px;top:593px;width:330px;height:1px;background:#808080;"></div>
<div style="left:31px;top:557px;width:33px;height:36px;background:#73e600;"></div>
<span class="t11 " style="left:33px;top:560px;">14:45</span>
<span class="t11 " style="left:33px;top:574px;">15:00</span>
<div style="left:66px;top:557px;width:38px;height:36px;background:#73e600;"></div>
<span class="t11" style="left:24.5px;top:560px;width:120px;text-align:center;">re2*</span>
<span class="t11" style="left:24.5px;top:574px;width:120px;text-align:center;">Mf</span>
<div style="left:106px;top:557px;width:33px;height:36px;background:#73e600;"></div>
<span class="t11" style="left:62.0px;top:560px;width:120px;text-align:center;">061</span>
<span class="t11" style="left:62.0px;top:574px;width:120px;text-align:center;">09,2</span>
<div style="left:141px;top:557px;width:18px;height:36px;background:#73e600;"></div>
<div style="left:161px;top:557px;width:78px;height:36px;background:#73e600;"></div>
<span class="t11 " style="left:163px;top:560px;">Sabel,</span>
<span class="t11 " style="left:163px;top:574px;">Susanne</span>
<div style="left:241px;top:557px;width:38px;height:36px;background:#73e600;"></div>
<span class="t11" style="left:199.5px;top:567px;width:120px;text-align:center;">e_Dx</span>
<div style="left:281px;top:557px;width:38px;height:36px;background:#73e600;"></div>
<span class="t11" style="left:239.5px;top:567px;width:120px;text-align:center;">Mf</span>
<div style="left:321px;top:557px;width:38px;height:36px;background:#73e600;"></div>
<span class="t11" style="left:279.5px;top:567px;width:120px;text-align:center;">Le</span>
<div style="left:30px;top:631px;width:330px;height:1px;background:#808080;"></div>
<div style="left:31px;top:595px;width:33px;height:36px;background:#73e600;"></div>
<span class="t11 " style="left:33px;top:598px;">15:15</span>
<span class="t11 " style="left:33px;top:612px;">15:30</span>
<div style="left:66px;top:595px;width:38px;height:36px;background:#73e600;"></div>
<div style="left:106px;top:595px;width:33px;height:36px;background:#73e600;"></div>
<div style="left:141px;top:595px;width:18px;height:36px;background:#73e600;"></div>
<div style="left:161px;top:595px;width:78px;height:36px;background:#73e600;"></div>
<div style="left:241px;top:595px;width:38px;height:36px;background:#73e600;"></div>
<div style="left:281px;top:595px;width:38px;height:36px;background:#73e600;"></div>
<div style="left:321px;top:595px;width:38px;height:36px;background:#73e600;"></div>
<div style="left:394px;top:0px;width:1px;height:23px;background:#808080;"></div>
<span class="t11 " style="left:363px;top:4px;">ZR01</span>
<div style="left:394px;top:24px;width:1px;height:608px;background:#c0c0c0;"></div>
<div style="left:434px;top:0px;width:1px;height:23px;background:#808080;"></div>
<span class="t11" style="left:352.5px;top:4px;width:120px;text-align:center;">Kurs</span>
<div style="left:434px;top:24px;width:1px;height:608px;background:#c0c0c0;"></div>
<div style="left:469px;top:0px;width:1px;height:23px;background:#808080;"></div>
<span class="t11" style="left:390.0px;top:4px;width:120px;text-align:center;">004</span>
<div style="left:469px;top:24px;width:1px;height:608px;background:#c0c0c0;"></div>
<div style="left:489px;top:0px;width:1px;height:23px;background:#808080;"></div>
<span class="t11" style="left:417.5px;top:4px;width:120px;text-align:center;">M</span>
<div style="left:489px;top:24px;width:1px;height:608px;background:#c0c0c0;"></div>
<div style="left:569px;top:0px;width:1px;height:23px;background:#808080;"></div>
<div style="left:490px;top:1px;width:79px;height:22px;background:#ffffe1;"></div>
<div class="clip" style="left:490px;top:1px;width:75px;height:22px;">
<span class="t11 " style="left:3px;top:3px;">000: 404/407 Mo (Mo)</span>
</div>
<div style="left:569px;top:24px;width:1px;height:608px;background:#c0c0c0;"></div>
<div style="left:609px;top:0px;width:1px;height:23px;background:#808080;"></div>
<span class="t11" style="left:527.5px;top:4px;width:120px;text-align:center;">PVor</span>
<div style="left:609px;top:24px;width:1px;height:608px;background:#c0c0c0;"></div>
<div style="left:649px;top:0px;width:1px;height:23px;background:#808080;"></div>
<span class="t11" style="left:567.5px;top:4px;width:120px;text-align:center;">Prüf</span>
<div style="left:649px;top:24px;width:1px;height:608px;background:#c0c0c0;"></div>
<div style="left:689px;top:0px;width:1px;height:23px;background:#808080;"></div>
<span class="t11" style="left:607.5px;top:4px;width:120px;text-align:center;">Prot</span>
<div style="left:689px;top:24px;width:1px;height:608px;background:#c0c0c0;"></div>
<div style="left:360px;top:61px;width:330px;height:1px;background:#c0c0c0;"></div>
<span class="t11 " style="left:363px;top:28px;">07:45</span>
<span class="t11 " style="left:363px;top:42px;">08:00</span>
<span class="t11" style="left:354.5px;top:28px;width:120px;text-align:center;">re1*</span>
<span class="t11" style="left:354.5px;top:42px;width:120px;text-align:center;">Le</span>
<span class="t11" style="left:392.0px;top:28px;width:120px;text-align:center;">040</span>
<span class="t11" style="left:392.0px;top:42px;width:120px;text-align:center;">07,2</span>
<span class="t11 " style="left:493px;top:35px;">Korn, Karlheinz</span>
<span class="t11" style="left:529.5px;top:35px;width:120px;text-align:center;">e_Dx</span>
<span class="t11" style="left:569.5px;top:35px;width:120px;text-align:center;">Le</span>
<span class="t11" style="left:609.5px;top:35px;width:120px;text-align:center;">Mf</span>
<div style="left:360px;top:99px;width:330px;height:1px;background:#c0c0c0;"></div>
<span class="t11 " style="left:363px;top:66px;">08:15</span>
<span class="t11 " style="left:363px;top:80px;">08:30</span>
<div style="left:360px;top:137px;width:330px;height:1px;background:#c0c0c0;"></div>
<span class="t11 " style="left:363px;top:104px;">08:45</span>
<span class="t11 " style="left:363px;top:118px;">09:00</span>
<span class="t11" style="left:354.5px;top:104px;width:120px;text-align:center;">re1*</span>
<span class="t11" style="left:354.5px;top:118px;width:120px;text-align:center;">Le</span>
<span class="t11" style="left:392.0px;top:104px;width:120px;text-align:center;">055</span>
<span class="t11" style="left:392.0px;top:118px;width:120px;text-align:center;">08,0</span>
<span class="t11 " style="left:493px;top:111px;">Pfanner, Petra</span>
<span class="t11" style="left:529.5px;top:111px;width:120px;text-align:center;">e_Dx</span>
<span class="t11" style="left:569.5px;top:111px;width:120px;text-align:center;">Le</span>
<span class="t11" style="left:609.5px;top:111px;width:120px;text-align:center;">Mf</span>
<div style="left:360px;top:175px;width:330px;height:1px;background:#c0c0c0;"></div>
<span class="t11 " style="left:363px;top:142px;">09:15</span>
<span class="t11 " style="left:363px;top:156px;">09:30</span>
<div style="left:360px;top:213px;width:330px;height:1px;background:#c0c0c0;"></div>
<span class="t11 " style="left:363px;top:180px;">09:45</span>
<span class="t11 " style="left:363px;top:194px;">10:00</span>
<div style="left:360px;top:251px;width:330px;height:1px;background:#c0c0c0;"></div>
<span class="t11 " style="left:363px;top:218px;">10:15</span>
<span class="t11 " style="left:363px;top:232px;">10:30</span>
<span class="t11" style="left:354.5px;top:218px;width:120px;text-align:center;">re2*</span>
<span class="t11" style="left:354.5px;top:232px;width:120px;text-align:center;">Mf</span>
<span class="t11" style="left:392.0px;top:218px;width:120px;text-align:center;">010</span>
<span class="t11" style="left:392.0px;top:232px;width:120px;text-align:center;">08,0</span>
<span class="t11 " style="left:493px;top:225px;">Bucher, Bob</span>
<span class="t11" style="left:529.5px;top:225px;width:120px;text-align:center;">e_Dx</span>
<span class="t11" style="left:569.5px;top:225px;width:120px;text-align:center;">Mf</span>
<span class="t11" style="left:609.5px;top:225px;width:120px;text-align:center;">Le</span>
<div style="left:360px;top:289px;width:330px;height:1px;background:#c0c0c0;"></div>
<span class="t11 " style="left:363px;top:256px;">10:45</span>
<span class="t11 " style="left:363px;top:270px;">11:00</span>
<div style="left:360px;top:327px;width:330px;height:1px;background:#c0c0c0;"></div>
<span class="t11 " style="left:363px;top:294px;">11:15</span>
<span class="t11 " style="left:363px;top:308px;">11:30</span>
<span class="t11" style="left:354.5px;top:294px;width:120px;text-align:center;">re2*</span>
<span class="t11" style="left:354.5px;top:308px;width:120px;text-align:center;">Mf</span>
<span class="t11" style="left:392.0px;top:294px;width:120px;text-align:center;">067</span>
<span class="t11" style="left:392.0px;top:308px;width:120px;text-align:center;">08,2</span>
<span class="t11 " style="left:493px;top:294px;">Schöller,</span>
<span class="t11 " style="left:493px;top:308px;">Sandra</span>
<span class="t11" style="left:529.5px;top:301px;width:120px;text-align:center;">e_Dx</span>
<span class="t11" style="left:569.5px;top:301px;width:120px;text-align:center;">Mf</span>
<span class="t11" style="left:609.5px;top:301px;width:120px;text-align:center;">Le</span>
<div style="left:360px;top:365px;width:330px;height:1px;background:#c0c0c0;"></div>
<span class="t11 " style="left:363px;top:332px;">11:45</span>
<span class="t11 " style="left:363px;top:346px;">12:00</span>
<div style="left:360px;top:403px;width:330px;height:1px;background:#c0c0c0;"></div>
<span class="t11 " style="left:363px;top:370px;">12:15</span>
<span class="t11 " style="left:363px;top:384px;">12:30</span>
<div style="left:360px;top:441px;width:330px;height:1px;background:#c0c0c0;"></div>
<span class="t11 " style="left:363px;top:408px;">12:45</span>
<span class="t11 " style="left:363px;top:422px;">13:00</span>
<div style="left:360px;top:479px;width:330px;height:1px;background:#c0c0c0;"></div>
<span class="t11 " style="left:363px;top:446px;">13:15</span>
<span class="t11 " style="left:363px;top:460px;">13:30</span>
<div style="left:360px;top:517px;width:330px;height:1px;background:#c0c0c0;"></div>
<span class="t11 " style="left:363px;top:484px;">13:45</span>
<span class="t11 " style="left:363px;top:498px;">14:00</span>
<div style="left:360px;top:555px;width:330px;height:1px;background:#c0c0c0;"></div>
<span class="t11 " style="left:363px;top:522px;">14:15</span>
<span class="t11 " style="left:363px;top:536px;">14:30</span>
<div style="left:360px;top:593px;width:330px;height:1px;background:#c0c0c0;"></div>
<span class="t11 " style="left:363px;top:560px;">14:45</span>
<span class="t11 " style="left:363px;top:574px;">15:00</span>
<div style="left:360px;top:631px;width:330px;height:1px;background:#c0c0c0;"></div>
<span class="t11 " style="left:363px;top:598px;">15:15</span>
<span class="t11 " style="left:363px;top:612px;">15:30</span>
<div style="left:724px;top:0px;width:1px;height:23px;background:#808080;"></div>
<span class="t11 " style="left:693px;top:4px;">ZR01</span>
<div style="left:724px;top:24px;width:1px;height:608px;background:#c0c0c0;"></div>
<div style="left:764px;top:0px;width:1px;height:23px;background:#808080;"></div>
<span class="t11" style="left:682.5px;top:4px;width:120px;text-align:center;">Kurs</span>
<div style="left:764px;top:24px;width:1px;height:608px;background:#c0c0c0;"></div>
<div style="left:799px;top:0px;width:1px;height:23px;background:#808080;"></div>
<span class="t11" style="left:720.0px;top:4px;width:120px;text-align:center;">003</span>
<div style="left:799px;top:24px;width:1px;height:608px;background:#c0c0c0;"></div>
<div style="left:819px;top:0px;width:1px;height:23px;background:#808080;"></div>
<span class="t11" style="left:747.5px;top:4px;width:120px;text-align:center;">M</span>
<div style="left:819px;top:24px;width:1px;height:608px;background:#c0c0c0;"></div>
<div style="left:899px;top:0px;width:1px;height:23px;background:#808080;"></div>
<div style="left:820px;top:1px;width:79px;height:22px;background:#ffffe1;"></div>
<div class="clip" style="left:820px;top:1px;width:75px;height:22px;">
<span class="t11 " style="left:3px;top:3px;">000: 407/404 Mo (Mo)</span>
</div>
<div style="left:899px;top:24px;width:1px;height:608px;background:#c0c0c0;"></div>
<div style="left:939px;top:0px;width:1px;height:23px;background:#808080;"></div>
<span class="t11" style="left:857.5px;top:4px;width:120px;text-align:center;">PVor</span>
<div style="left:939px;top:24px;width:1px;height:608px;background:#c0c0c0;"></div>
<div style="left:979px;top:0px;width:1px;height:23px;background:#808080;"></div>
<span class="t11" style="left:897.5px;top:4px;width:120px;text-align:center;">Prüf</span>
<div style="left:979px;top:24px;width:1px;height:608px;background:#c0c0c0;"></div>
<div style="left:1019px;top:0px;width:1px;height:23px;background:#808080;"></div>
<span class="t11" style="left:937.5px;top:4px;width:120px;text-align:center;">Prot</span>
<div style="left:1019px;top:24px;width:1px;height:608px;background:#c0c0c0;"></div>
<div style="left:690px;top:61px;width:330px;height:1px;background:#c0c0c0;"></div>
<span class="t11 " style="left:693px;top:28px;">07:45</span>
<span class="t11 " style="left:693px;top:42px;">08:00</span>
<div style="left:690px;top:99px;width:330px;height:1px;background:#c0c0c0;"></div>
<span class="t11 " style="left:693px;top:66px;">08:15</span>
<span class="t11 " style="left:693px;top:80px;">08:30</span>
<span class="t11" style="left:684.5px;top:66px;width:120px;text-align:center;">re1*</span>
<span class="t11" style="left:684.5px;top:80px;width:120px;text-align:center;">Le</span>
<span class="t11" style="left:722.0px;top:66px;width:120px;text-align:center;">041</span>
<span class="t11" style="left:722.0px;top:80px;width:120px;text-align:center;">07,2</span>
<span class="t11 " style="left:823px;top:73px;">Korn, Konrad</span>
<span class="t11" style="left:859.5px;top:73px;width:120px;text-align:center;">e_Dx</span>
<span class="t11" style="left:899.5px;top:73px;width:120px;text-align:center;">Le</span>
<span class="t11" style="left:939.5px;top:73px;width:120px;text-align:center;">Mf</span>
<div style="left:690px;top:137px;width:330px;height:1px;background:#c0c0c0;"></div>
<span class="t11 " style="left:693px;top:104px;">08:45</span>
<span class="t11 " style="left:693px;top:118px;">09:00</span>
<div style="left:690px;top:175px;width:330px;height:1px;background:#c0c0c0;"></div>
<span class="t11 " style="left:693px;top:142px;">09:15</span>
<span class="t11 " style="left:693px;top:156px;">09:30</span>
<span class="t11" style="left:684.5px;top:142px;width:120px;text-align:center;">re1*</span>
<span class="t11" style="left:684.5px;top:156px;width:120px;text-align:center;">Le</span>
<span class="t11" style="left:722.0px;top:142px;width:120px;text-align:center;">005</span>
<span class="t11" style="left:722.0px;top:156px;width:120px;text-align:center;">09,5</span>
<span class="t11 " style="left:823px;top:149px;">Börner, Brigitte</span>
<span class="t11" style="left:859.5px;top:149px;width:120px;text-align:center;">e_Dx</span>
<span class="t11" style="left:899.5px;top:149px;width:120px;text-align:center;">Le</span>
<span class="t11" style="left:939.5px;top:149px;width:120px;text-align:center;">Mf</span>
<div style="left:690px;top:213px;width:330px;height:1px;background:#c0c0c0;"></div>
<span class="t11 " style="left:693px;top:180px;">09:45</span>
<span class="t11 " style="left:693px;top:194px;">10:00</span>
<div style="left:690px;top:251px;width:330px;height:1px;background:#c0c0c0;"></div>
<span class="t11 " style="left:693px;top:218px;">10:15</span>
<span class="t11 " style="left:693px;top:232px;">10:30</span>
<div style="left:690px;top:289px;width:330px;height:1px;background:#c0c0c0;"></div>
<span class="t11 " style="left:693px;top:256px;">10:45</span>
<span class="t11 " style="left:693px;top:270px;">11:00</span>
<span class="t11" style="left:684.5px;top:256px;width:120px;text-align:center;">re2*</span>
<span class="t11" style="left:684.5px;top:270px;width:120px;text-align:center;">Mf</span>
<span class="t11" style="left:722.0px;top:256px;width:120px;text-align:center;">015</span>
<span class="t11" style="left:722.0px;top:270px;width:120px;text-align:center;">08,0</span>
<span class="t11 " style="left:823px;top:263px;">Diener, Doro</span>
<span class="t11" style="left:859.5px;top:263px;width:120px;text-align:center;">e_Dx</span>
<span class="t11" style="left:899.5px;top:263px;width:120px;text-align:center;">Mf</span>
<span class="t11" style="left:939.5px;top:263px;width:120px;text-align:center;">Le</span>
<div style="left:690px;top:327px;width:330px;height:1px;background:#c0c0c0;"></div>
<span class="t11 " style="left:693px;top:294px;">11:15</span>
<span class="t11 " style="left:693px;top:308px;">11:30</span>
<div style="left:690px;top:365px;width:330px;height:1px;background:#c0c0c0;"></div>
<span class="t11 " style="left:693px;top:332px;">11:45</span>
<span class="t11 " style="left:693px;top:346px;">12:00</span>
<div style="left:690px;top:403px;width:330px;height:1px;background:#c0c0c0;"></div>
<span class="t11 " style="left:693px;top:370px;">12:15</span>
<span class="t11 " style="left:693px;top:384px;">12:30</span>
<div style="left:690px;top:441px;width:330px;height:1px;background:#c0c0c0;"></div>
<span class="t11 " style="left:693px;top:408px;">12:45</span>
<span class="t11 " style="left:693px;top:422px;">13:00</span>
<div style="left:690px;top:479px;width:330px;height:1px;background:#c0c0c0;"></div>
<span class="t11 " style="left:693px;top:446px;">13:15</span>
<span class="t11 " style="left:693px;top:460px;">13:30</span>
<div style="left:690px;top:517px;width:330px;height:1px;background:#c0c0c0;"></div>
<span class="t11 " style="left:693px;top:484px;">13:45</span>
<span class="t11 " style="left:693px;top:498px;">14:00</span>
<div style="left:690px;top:555px;width:330px;height:1px;background:#c0c0c0;"></div>
<span class="t11 " style="left:693px;top:522px;">14:15</span>
<span class="t11 " style="left:693px;top:536px;">14:30</span>
<div style="left:690px;top:593px;width:330px;height:1px;background:#c0c0c0;"></div>
<span class="t11 " style="left:693px;top:560px;">14:45</span>
<span class="t11 " style="left:693px;top:574px;">15:00</span>
<div style="left:690px;top:631px;width:330px;height:1px;background:#c0c0c0;"></div>
<span class="t11 " style="left:693px;top:598px;">15:15</span>
<span class="t11 " style="left:693px;top:612px;">15:30</span>
<div style="left:320px;top:328px;width:39px;height:37px;border:1px dotted #000;"></div>
</div>
<div style="left:975px;top:130px;width:16px;height:648px;background:#f0f0f0;"></div>
<div style="left:975px;top:147px;width:15px;height:407px;background:#cdcdcd;"></div>
<svg style="left:978px;top:135px" width="9" height="7" viewBox="0 0 9 7"><path d="M1,6 L4.5,2.5 L8,6" fill="none" stroke="#606060" stroke-width="2"/></svg>
<svg style="left:978px;top:749px" width="9" height="7" viewBox="0 0 9 7"><path d="M1,1 L4.5,4.5 L8,1" fill="none" stroke="#606060" stroke-width="2"/></svg>
<div style="left:7px;top:762px;width:968px;height:16px;background:#f0f0f0;"></div>
<div style="left:24px;top:762px;width:86px;height:15px;background:#cdcdcd;"></div>
<svg style="left:11px;top:765px" width="7" height="10" viewBox="0 0 7 10"><path d="M6,1 L2,5 L6,9" fill="none" stroke="#606060" stroke-width="2"/></svg>
<svg style="left:962px;top:765px" width="7" height="10" viewBox="0 0 7 10"><path d="M1,1 L5,5 L1,9" fill="none" stroke="#606060" stroke-width="2"/></svg>
<div style="left:8px;top:779px;width:802px;height:16px;background:linear-gradient(#ffffff,#ececec);"></div>
<div style="left:8px;top:796px;width:14px;height:89px;background:#f6f6f6;"></div>
<div style="left:7px;top:778px;width:803px;height:1px;background:#e0e0e0;"></div>
<div style="left:7px;top:795px;width:803px;height:1px;background:#808080;"></div>
<div style="left:23px;top:813px;width:787px;height:1px;background:#c0c0c0;"></div>
<div style="left:7px;top:813px;width:16px;height:1px;background:#606060;"></div>
<div style="left:23px;top:831px;width:787px;height:1px;background:#c0c0c0;"></div>
<div style="left:7px;top:831px;width:16px;height:1px;background:#606060;"></div>
<div style="left:23px;top:849px;width:787px;height:1px;background:#c0c0c0;"></div>
<div style="left:7px;top:849px;width:16px;height:1px;background:#606060;"></div>
<div style="left:23px;top:867px;width:787px;height:1px;background:#c0c0c0;"></div>
<div style="left:7px;top:867px;width:16px;height:1px;background:#606060;"></div>
<div style="left:23px;top:885px;width:787px;height:1px;background:#c0c0c0;"></div>
<div style="left:7px;top:885px;width:16px;height:1px;background:#606060;"></div>
<div style="left:22px;top:778px;width:1px;height:18px;background:#808080;"></div>
<div style="left:22px;top:796px;width:1px;height:90px;background:#808080;"></div>
<div style="left:57px;top:778px;width:1px;height:18px;background:#808080;"></div>
<div style="left:57px;top:796px;width:1px;height:90px;background:#c0c0c0;"></div>
<div style="left:92px;top:778px;width:1px;height:18px;background:#808080;"></div>
<div style="left:92px;top:796px;width:1px;height:90px;background:#c0c0c0;"></div>
<div style="left:132px;top:778px;width:1px;height:18px;background:#808080;"></div>
<div style="left:132px;top:796px;width:1px;height:90px;background:#c0c0c0;"></div>
<div style="left:275px;top:778px;width:1px;height:18px;background:#808080;"></div>
<div style="left:275px;top:796px;width:1px;height:90px;background:#c0c0c0;"></div>
<div style="left:291px;top:778px;width:1px;height:18px;background:#808080;"></div>
<div style="left:291px;top:796px;width:1px;height:90px;background:#c0c0c0;"></div>
<div style="left:307px;top:778px;width:1px;height:18px;background:#808080;"></div>
<div style="left:307px;top:796px;width:1px;height:90px;background:#c0c0c0;"></div>
<div style="left:323px;top:778px;width:1px;height:18px;background:#808080;"></div>
<div style="left:323px;top:796px;width:1px;height:90px;background:#c0c0c0;"></div>
<div style="left:339px;top:778px;width:1px;height:18px;background:#808080;"></div>
<div style="left:339px;top:796px;width:1px;height:90px;background:#c0c0c0;"></div>
<div style="left:355px;top:778px;width:1px;height:18px;background:#808080;"></div>
<div style="left:355px;top:796px;width:1px;height:90px;background:#c0c0c0;"></div>
<div style="left:371px;top:778px;width:1px;height:18px;background:#808080;"></div>
<div style="left:371px;top:796px;width:1px;height:90px;background:#c0c0c0;"></div>
<div style="left:387px;top:778px;width:1px;height:18px;background:#808080;"></div>
<div style="left:387px;top:796px;width:1px;height:90px;background:#c0c0c0;"></div>
<div style="left:404px;top:778px;width:1px;height:18px;background:#808080;"></div>
<div style="left:404px;top:796px;width:1px;height:90px;background:#c0c0c0;"></div>
<div style="left:496px;top:778px;width:1px;height:18px;background:#808080;"></div>
<div style="left:496px;top:796px;width:1px;height:90px;background:#c0c0c0;"></div>
<div style="left:535px;top:778px;width:1px;height:18px;background:#808080;"></div>
<div style="left:535px;top:796px;width:1px;height:90px;background:#c0c0c0;"></div>
<div style="left:575px;top:778px;width:1px;height:18px;background:#808080;"></div>
<div style="left:575px;top:796px;width:1px;height:90px;background:#c0c0c0;"></div>
<div style="left:624px;top:778px;width:1px;height:18px;background:#808080;"></div>
<div style="left:624px;top:796px;width:1px;height:90px;background:#c0c0c0;"></div>
<div style="left:719px;top:778px;width:1px;height:18px;background:#808080;"></div>
<div style="left:719px;top:796px;width:1px;height:90px;background:#c0c0c0;"></div>
<div style="left:809px;top:778px;width:1px;height:18px;background:#808080;"></div>
<div style="left:809px;top:796px;width:1px;height:90px;background:#c0c0c0;"></div>
<span class="t11 " style="left:26px;top:781px;">SchN</span>
<span class="t11 " style="left:61px;top:781px;">Kurs</span>
<span class="t11 " style="left:96px;top:781px;">KursL</span>
<span class="t11 " style="left:136px;top:781px;">Prüfungsgruppe</span>
<span class="t11 " style="left:278.5px;top:781px;">M</span>
<span class="t11 " style="left:294.5px;top:781px;">M</span>
<span class="t11 " style="left:310.5px;top:781px;">M</span>
<span class="t11 " style="left:326.5px;top:781px;">M</span>
<span class="t11 " style="left:342.5px;top:781px;">M</span>
<span class="t11 " style="left:358.5px;top:781px;">M</span>
<span class="t11 " style="left:374.5px;top:781px;">M</span>
<span class="t11 " style="left:390.5px;top:781px;">M</span>
<span class="t11 " style="left:408px;top:781px;">Halbjahrersnoten</span>
<span class="t11 " style="left:500px;top:781px;">Schnitt</span>
<span class="t11 " style="left:539px;top:781px;">mü</span>
<span class="t11 " style="left:579px;top:781px;">Datum</span>
<span class="t11 " style="left:628px;top:781px;">Tag</span>
<span class="t11 " style="left:723px;top:781px;">Dauer</span>
<span class="t11 " style="left:26px;top:799px;">063</span>
<span class="t11 " style="left:61px;top:799px;">re2</span>
<span class="t11 " style="left:96px;top:799px;">Mf</span>
<span class="t11 " style="left:136px;top:799px;">01: Re</span>
<span class="t11 " style="left:500px;top:799px;">08,2</span>
<span class="t11 " style="left:542px;top:799px;">?</span>
<span class="t11 " style="left:579px;top:799px;">04. Juni</span>
<span class="t11 " style="left:628px;top:799px;">Montag</span>
<span class="t11 " style="left:723px;top:799px;">11:45-12:20</span>
<span class="mono" style="left:408px;top:799px;">10 09 09 05</span>
<svg style="left:10px;top:798px" width="7" height="12" viewBox="0 0 7 12"><path d="M0,0 L6.5,5.5 L0,11 Z" fill="#000"/></svg>
<div style="left:991px;top:136px;width:1px;height:749px;background:#a0a0a0;"></div>
<div style="left:991px;top:136px;width:7px;height:1px;background:#a0a0a0;"></div>
<div style="left:1108px;top:136px;width:132px;height:1px;background:#a0a0a0;"></div>
<div style="left:1239px;top:136px;width:1px;height:749px;background:#a0a0a0;"></div>
<div style="left:991px;top:884px;width:8px;height:1px;background:#a0a0a0;"></div>
<div style="left:1219px;top:884px;width:21px;height:1px;background:#a0a0a0;"></div>
<span class="t12 " style="left:999px;top:131px;letter-spacing:0.261px;">Druckeinstellungen</span>
<div style="left:993px;top:147px;width:246px;height:26px;background:#f0f0f0;"></div>
<div style="left:993px;top:147px;width:246px;height:2px;background:#fbfbfb;border-top:1px solid #e0e0e0;"></div>
<div style="left:995px;top:151px;width:41px;height:22px;background:#f0f0f0;border:1px solid #e0e0e0;border-bottom:none;"></div>
<span class="t12 " style="left:1002px;top:154px;">1/Bl.</span>
<div style="left:1036px;top:149px;width:44px;height:25px;background:#fff;"></div>
<span class="t12 " style="left:1043px;top:156px;">2/Bl.</span>
<div style="left:1080px;top:151px;width:41px;height:22px;background:#f0f0f0;border:1px solid #e0e0e0;border-bottom:none;"></div>
<span class="t12 " style="left:1087.5px;top:154px;">3/Bl.</span>
<div style="left:1121px;top:151px;width:40px;height:22px;background:#f0f0f0;border:1px solid #e0e0e0;border-bottom:none;"></div>
<span class="t12 " style="left:1128.5px;top:154px;">5/Bl.</span>
<div class="cb" style="left:1003px;top:190px;width:9px;height:9px;"></div>
<span class="t12 " style="left:1017.5px;top:188px;letter-spacing:0.063px;">mit Schnitt / mit mündl. Noten</span>
<div class="cb" style="left:1003px;top:210px;width:9px;height:9px;"></div>
<span class="t12 " style="left:1017.5px;top:208px;letter-spacing:0.036px;">mit Merker</span>
<div class="cb" style="left:1003px;top:230px;width:9px;height:9px;"></div>
<span class="t12 " style="left:1017.5px;top:228px;letter-spacing:0.099px;">mit Dienstbez. bei eig.Lehrkräften</span>
<span class="t12 " style="left:1003.5px;top:259px;color:#a0a0a0;letter-spacing:0.025px;">Bereich Takte: 17 - 32</span>
<div class="clip" style="left:1003px;top:280px;width:236px;height:20px;">
<span class="t12 " style="left:0.5px;top:4px;color:#a0a0a0;letter-spacing:0.079px;">Pausenmarkierung nach Takt: 4,5,10,12,16,20</span>
</div>
<span class="t11 " style="left:1003.5px;top:312px;color:#a0a0a0;">Schrift: Arial (8)</span>
<span class="t12 " style="left:1003.5px;top:343px;letter-spacing:0.177px;">gedruckt werden jeweils die</span>
<span class="t12 " style="left:1003.5px;top:358px;letter-spacing:0.111px;">geöffneten Blätter (Doppelklick</span>
<span class="t12 " style="left:1003.5px;top:373px;letter-spacing:0.115px;">öffnet/schließt ein Blatt)</span>
<div class="btn" style="left:1205px;top:337px;width:23px;height:23px;"></div>
<div class="btn" style="left:1205px;top:368px;width:23px;height:23px;"></div>
<svg style="left:1208px;top:340px" width="18" height="18" viewBox="0 0 18 18">
<path d="M3.5,1.5 L9.5,1.5 L9.5,8.5 L3.5,8.5 Z" fill="#fff" stroke="#000" stroke-width="1"/>
<path d="M5,3.5 H7 M5,5.5 H8" stroke="#000" stroke-width="1"/>
<text x="8" y="9" font-family="Liberation Serif" font-weight="bold" font-size="10" fill="#900010">G</text>
<path d="M0.5,9.5 H16.5 V14.5 L15.5,16.5 H1.5 L0.5,14.5 Z" fill="#fff" stroke="#000" stroke-width="1"/>
<path d="M2,11.5 H13" stroke="#000" stroke-width="1" stroke-dasharray="1 1"/>
<rect x="13" y="10.5" width="2" height="2" fill="#ff0000"/>
<rect x="1.5" y="13.5" width="14" height="2" fill="#a0a0a0"/>
</svg>
<svg style="left:1207px;top:370px" width="17" height="18" viewBox="0 0 17 18">
<path d="M2.5,4 V17 M2.5,9.5 H5.5 M2.5,14.5 H5.5" stroke="#000" stroke-width="1" fill="none"/>
<path d="M7,4.5 H9 M10,4.5 H13 M11,9.5 H13 M14,9.5 H16 M11,14.5 H13 M14,14.5 H16" stroke="#000" stroke-width="1"/>
<path d="M1.5,2.5 L2.5,1.5 L4.5,1.5 L5.5,2.5 L5.5,4.5 L1.5,4.5 Z" fill="#ffee00" stroke="#000" stroke-width="1"/>
<path d="M5.5,7.5 L6.5,6.5 L8,6.5 L9,7.5 L9,9.5 L5.5,9.5 Z" fill="#ffee00" stroke="#000" stroke-width="1"/>
<path d="M5.5,12.5 L6.5,11.5 L8,11.5 L9,12.5 L9,14.5 L5.5,14.5 Z" fill="#ffee00" stroke="#000" stroke-width="1"/>
</svg>
<div class="cbk" style="left:1004px;top:406px;width:11px;height:11px;"></div>
<svg style="left:1005px;top:407px" width="9" height="9" viewBox="0 0 9 9"><path d="M1.5,4.5 L3.5,6.5 L7.5,2" fill="none" stroke="#808080" stroke-width="2"/></svg>
<span class="t13 " style="left:1022.5px;top:404px;">Blatt 01  (002)</span>
<div class="cbk" style="left:1023px;top:424px;width:11px;height:11px;"></div>
<svg style="left:1024px;top:425px" width="9" height="9" viewBox="0 0 9 9"><path d="M1.5,4.5 L3.5,6.5 L7.5,2" fill="none" stroke="#808080" stroke-width="2"/></svg>
<span class="t13 " style="left:1041.5px;top:422px;">06: 404/407 Mo (Mo)</span>
<div class="cbk" style="left:1023px;top:442px;width:11px;height:11px;"></div>
<svg style="left:1024px;top:443px" width="9" height="9" viewBox="0 0 9 9"><path d="M1.5,4.5 L3.5,6.5 L7.5,2" fill="none" stroke="#808080" stroke-width="2"/></svg>
<span class="t13 " style="left:1041.5px;top:440px;">07: 407/404 Mo (Mo)</span>
<div class="cbk" style="left:1004px;top:460px;width:11px;height:11px;"></div>
<svg style="left:1005px;top:461px" width="9" height="9" viewBox="0 0 9 9"><path d="M1.5,4.5 L3.5,6.5 L7.5,2" fill="none" stroke="#808080" stroke-width="2"/></svg>
<span class="t13 " style="left:1022.5px;top:458px;">Blatt 02  (002)</span>
<svg style="left:0;top:0" width="1248" height="893" viewBox="0 0 1248 893">
<g fill="none" stroke="#ff0000" stroke-width="5">
<rect x="161.5" y="122.5" width="86" height="37.5" rx="6" ry="6"/>
<rect x="492.5" y="122.5" width="87" height="36" rx="6" ry="6"/>
<rect x="822.5" y="124" width="87" height="36.5" rx="6" ry="6"/>
<rect x="29.5" y="449.5" width="953.5" height="56" rx="7" ry="7"/>
</g>
<g>
<path d="M757.5,476.5 L757.5,491.5 L761.5,487.5 L764.5,494.5 L766.5,493.5 L763.5,486.5 L768.5,486.5 Z" fill="#fff" stroke="#000" stroke-width="1"/>
<path d="M761.5,489.5 H771.5 V501.5 H761.5 Z" fill="none" stroke="#000" stroke-width="1"/>
<path d="M757.5,476.5 L757.5,491.5 L761.5,487.5 L764.5,494.5 L766.5,493.5 L763.5,486.5 L768.5,486.5 Z" fill="#fff" stroke="#000" stroke-width="1"/>
</g>
</svg>
</body></html>
